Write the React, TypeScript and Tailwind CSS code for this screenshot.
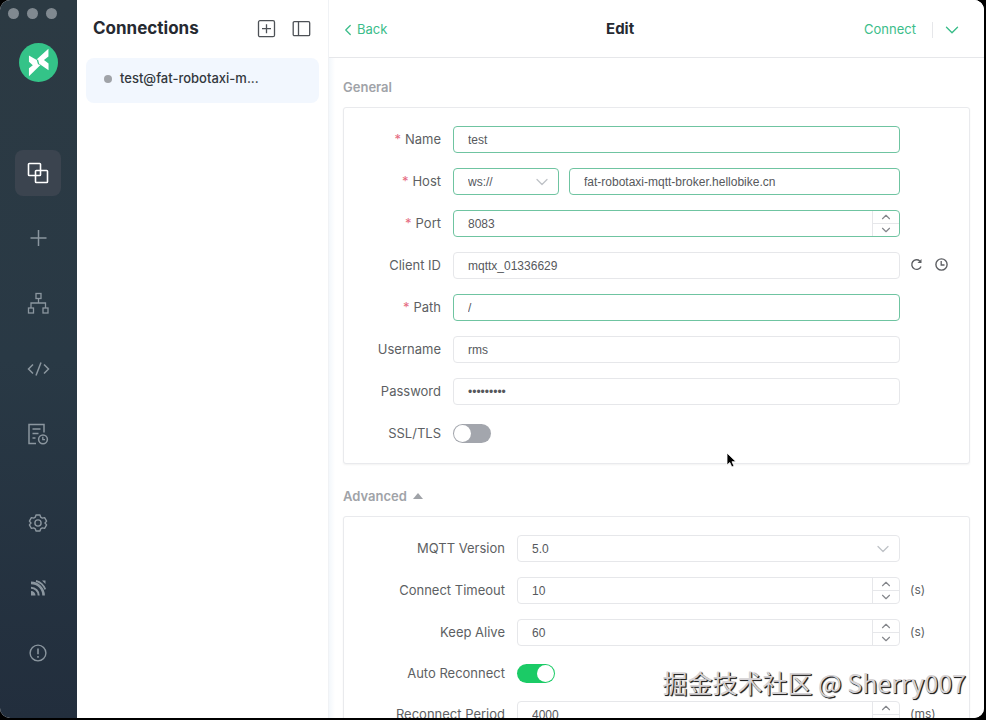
import React from "react";
import { ChevronDown, ChevronUp, ChevronLeft } from "lucide-react";

type IconProps = {
  size?: number;
  className?: string;
  children: React.ReactNode;
};

const Icon = ({ size = 24, className = "", children }: IconProps) => (
  <svg
    width={size}
    height={size}
    viewBox={`0 0 ${size} ${size}`}
    fill="none"
    stroke="currentColor"
    strokeWidth="1.3"
    className={className}
    aria-hidden="true"
  >
    {children}
  </svg>
);

const navTop = [
  {
    name: "Connections",
    icon: (
      <Icon>
        <rect x="2.5" y="2.5" width="12" height="12" rx="0.8" strokeWidth="1.6" />
        <rect x="9.5" y="9.5" width="12" height="12" rx="0.8" strokeWidth="1.6" />
      </Icon>
    ),
  },
  {
    name: "New",
    icon: (
      <Icon>
        <path d="M12.5 4v16M4.5 12h16" strokeWidth="1.5" />
      </Icon>
    ),
  },
  {
    name: "Topics",
    icon: (
      <Icon>
        <rect x="10" y="2.5" width="5" height="5" />
        <rect x="2.5" y="17" width="5" height="5" />
        <rect x="17" y="17" width="5" height="5" />
        <path d="M12.5 7.5V12M5 17v-5h14.5v5" />
      </Icon>
    ),
  },
  {
    name: "Script",
    icon: (
      <Icon>
        <path d="M7 8.5L2.5 13 7 17.5M18 8.5l4.5 4.5-4.5 4.500M15 6.5l-5 13" strokeWidth="1.5" />
      </Icon>
    ),
  },
  {
    name: "Log",
    icon: (
      <Icon>
        <path d="M10 22.5H3v-19h15v8" strokeWidth="1.5" />
        <path d="M6.5 8h8M6.5 12.5h6M6.5 17h3" />
        <circle cx="17" cy="18.3" r="4.4" strokeWidth="1.5" />
        <path d="M16.8 15.8v2.8H19" />
      </Icon>
    ),
  },
];

const navBottom = [
  {
    name: "Settings",
    icon: (
      <Icon>
        <path
          d="M10 4h4l.7 2.2 1.6.9 2.3-.5 2 3.5-1.6 1.9 1.6 1.9-2 3.5-2.3-.5-1.6.9L14 20h-4l-.7-2.2-1.6-.9-2.3.5-2-3.5L5 12l-1.6-1.9 2-3.5 2.3.5 1.6-.9z"
          strokeWidth="1.4"
          strokeLinejoin="round"
        />
        <circle cx="12" cy="12" r="3.1" strokeWidth="1.4" />
      </Icon>
    ),
  },
  {
    name: "Feed",
    icon: (
      <Icon>
        <path d="M5 15a4.500 4.500 0 0 1 4.500 4.500H5zM16 4.500h3.500V8z" fill="currentColor" stroke="none" />
        <path d="M5 11.800a7.700 7.700 0 0 1 7.700 7.700" strokeWidth="2" />
        <path d="M5 6.900a12.600 12.600 0 0 1 12.600 12.600" strokeWidth="2.600" />
        <path d="M10 4.800c4.500 1.200 7.600 4.200 9.300 8.600" strokeWidth="1.800" />
      </Icon>
    ),
  },
  {
    name: "About",
    icon: (
      <Icon>
        <circle cx="12" cy="12" r="7.9" strokeWidth="1.4" />
        <path d="M12 7.5v5.7M12 15v1.8" strokeWidth="1.6" />
      </Icon>
    ),
  },
];

type FieldProps = {
  id: string;
  label: string;
  required?: boolean;
  wide?: boolean;
  short?: boolean;
  suffix?: React.ReactNode;
  children: React.ReactNode;
};

const Field = ({ id, label, required, wide, short, suffix, children }: FieldProps) => (
  <div className={`flex items-center gap-3 ${short ? "h-[25px]" : "h-[27px]"}`}>
    <label
      htmlFor={id}
      className={`shrink-0 pb-0.5 text-right text-[13px] leading-5 whitespace-nowrap text-[#5d5f63] ${wide ? "w-[161px]" : "w-[97px]"}`}
    >
      {required && <span className="mr-1 text-[#e56a80]">*</span>}
      {label}
    </label>
    <div className="flex min-w-0 flex-1 items-center gap-[10px]">{children}</div>
    <div className="-ml-0.5 flex w-[59px] shrink-0 items-center gap-3 pb-0.5 text-xs text-[#5d5f63]">{suffix}</div>
  </div>
);

const boxClass =
  "h-[27px] w-full min-w-0 rounded-[4px] border bg-white px-[14px] font-['Liberation_Sans',Arial,sans-serif] text-[12px] text-[#56585c] outline-none";
const borderFor = (valid?: boolean) => (valid ? "border-[#6fc4a1]" : "border-[#e6e7ea]");

type InputProps = { id: string; value: string; valid?: boolean; type?: string };

const TextInput = ({ id, value, valid, type = "text" }: InputProps) => (
  <input id={id} type={type} defaultValue={value} aria-label={id} className={`${boxClass} ${borderFor(valid)}`} />
);

const NumberInput = ({ id, value, valid }: InputProps) => (
  <div className={`flex h-[27px] w-full overflow-hidden rounded-[4px] border bg-white ${borderFor(valid)}`}>
    <input
      id={id}
      type="number"
      defaultValue={value}
      className="min-w-0 flex-1 px-[14px] font-['Liberation_Sans',Arial,sans-serif] text-[12px] text-[#56585c] outline-none [appearance:textfield] [&::-webkit-inner-spin-button]:appearance-none"
    />
    <div className="flex w-[27px] flex-col border-l border-[#e6e7ea] text-[#85878c]">
      <button type="button" aria-label="Increase" className="flex h-1/2 items-center justify-center border-b border-[#e6e7ea]">
        <ChevronUp size={14} />
      </button>
      <button type="button" aria-label="Decrease" className="flex h-1/2 items-center justify-center">
        <ChevronDown size={14} />
      </button>
    </div>
  </div>
);

const Select = ({ id, value, valid }: InputProps) => (
  <div className="relative w-full">
    <select id={id} className={`block appearance-none ${boxClass} ${borderFor(valid)}`}>
      <option>{value}</option>
    </select>
    <ChevronDown size={20} strokeWidth={1.5} className="pointer-events-none absolute top-1 right-[7px] text-[#bfc2c7]" />
  </div>
);

const Toggle = ({ id, on }: { id: string; on?: boolean }) => (
  <input
    id={id}
    type="checkbox"
    role="switch"
    defaultChecked={on}
    className="flex h-[19px] w-[38px] appearance-none items-center rounded-full bg-[#a3a6ad] px-px before:size-[17px] before:rounded-full before:bg-white checked:justify-end checked:bg-[#1bcb66]"
  />
);

const Sidebar = () => (
  <aside className="flex w-[77px] shrink-0 flex-col items-center bg-linear-to-b from-[#2c3a43] via-[#293945] to-[#222e3d] pr-px pb-[42px] text-[#8b969f]">
    <div className="flex gap-2 self-start pt-2 pl-2">
      <span className="size-[11px] rounded-full bg-[#808990]" />
      <span className="size-[11px] rounded-full bg-[#808990]" />
      <span className="size-[11px] rounded-full bg-[#808990]" />
    </div>
    <svg viewBox="0 0 40 40" className="mt-6 size-[39px]" aria-hidden="true">
      <circle cx="20" cy="20" r="20" fill="#34c388" />
      <path d="M10.200 12.800l8 4.600 1.300 4.300 2.500.8L10.200 34v-8l4-3.300-4-3.500z" fill="#fff" />
      <path d="M30.200 6v7.800l-4.600 3.600 4.700 3.700V28l-9.600-6.800-1.100-3.900-1.600-.3z" fill="#fff" />
    </svg>
    <nav className="mt-[68px] flex flex-1 flex-col items-center">
      <div className="flex flex-col gap-[19px]">
        {navTop.map((item, idx) => (
          <button
            key={item.name}
            aria-label={item.name}
            className={`flex size-[46px] items-center justify-center rounded-lg ${idx === 0 ? "bg-[#3b444f] text-white" : ""}`}
          >
            {item.icon}
          </button>
        ))}
      </div>
      <div className="mt-auto flex flex-col gap-[19px]">
        {navBottom.map((item) => (
          <button key={item.name} aria-label={item.name} className="flex size-[46px] items-center justify-center">
            {item.icon}
          </button>
        ))}
      </div>
    </nav>
  </aside>
);

const Connections = () => (
  <section className="w-[251px] shrink-0 px-[9px]">
    <div className="flex h-[58px] items-center px-2 text-[#4d5156]">
      <h1 className="-ml-px flex-1 text-[17px] font-bold text-[#262a31]">Connections</h1>
      <button aria-label="New connection" className="mr-4">
        <Icon size={19}>
          <rect x="1.5" y="0.700" width="16" height="16" rx="1.5" />
          <path d="M9.5 4.200v9M5 8.700h9" />
        </Icon>
      </button>
      <button aria-label="Toggle list">
        <Icon size={19}>
          <rect x="1.2" y="1.700" width="16.5" height="14" rx="1.2" />
          <path d="M6.5 1.700v14" />
        </Icon>
      </button>
    </div>
    <a href="#test" className="flex h-[45px] items-center gap-2 rounded-lg bg-[#f2f7fe] pb-1 pl-[18px] text-[13px] font-medium text-[#33373d]">
      <span className="size-2 rounded-full bg-[#a0a3a8]" />
      test@fat-robotaxi-m...
    </a>
  </section>
);

const App = () => {
  return (
    <div className="relative h-screen overflow-hidden bg-black pr-0.5 pb-0.5 font-['Inter',sans-serif]">
      <div className="flex h-full overflow-hidden rounded-[10px] bg-white">
        <Sidebar />
        <Connections />
        <main className="min-w-0 flex-1 border-l border-[#f0f2f5] bg-linear-to-r from-[#f3f7fb] to-white to-[6px]">
          <header className="grid h-[58px] grid-cols-[4fr_auto_5fr] items-center border-b border-[#e6e7ea] bg-white pt-0.5 pr-[21px] pl-[14px] text-[13px] text-[#3bbd8a]">
            <button className="-ml-1 flex items-center">
              <ChevronLeft size={18} strokeWidth={1.7} />
              Back
            </button>
            <h2 className="text-center text-[15px] font-bold text-[#262a31]">Edit</h2>
            <div className="flex items-center justify-end">
              <button>Connect</button>
              <span className="mr-2 ml-4 h-4 border-l border-[#e6e7ea]" />
              <button aria-label="More">
                <ChevronDown size={22} strokeWidth={1.5} />
              </button>
            </div>
          </header>

          <form className="px-[14px]">
            <h3 className="mt-[19px] text-[13px] leading-5 font-semibold text-[#a0a3a8]">General</h3>
            <div className="mt-[10px] flex flex-col gap-[15px] rounded-[3px] border border-[#e9eaed] bg-white pt-[18px] pb-4 shadow-xs">
              <Field id="name" label="Name" required>
                <TextInput id="name" value="test" valid />
              </Field>
              <Field id="protocol" label="Host" required>
                <div className="w-[106px] shrink-0">
                  <Select id="protocol" value="ws://" valid />
                </div>
                <TextInput id="host" value="fat-robotaxi-mqtt-broker.hellobike.cn" valid />
              </Field>
              <Field id="port" label="Port" required>
                <NumberInput id="port" value="8083" valid />
              </Field>
              <Field
                id="clientId"
                label="Client ID"
                suffix={
                  <>
                    <button type="button" aria-label="Refresh">
                      <Icon size={13}>
                        <path d="M11 8.5A4.8 4.8 0 1 1 9.8 3" strokeWidth="1.4" />
                        <path d="M11.5 1v4h-4z" fill="currentColor" stroke="none" />
                      </Icon>
                    </button>
                    <button type="button" aria-label="Set time">
                      <Icon size={13}>
                        <circle cx="6.5" cy="6.5" r="5.6" strokeWidth="1.4" />
                        <path d="M6.2 3v4h3.3" />
                      </Icon>
                    </button>
                  </>
                }
              >
                <TextInput id="clientId" value="mqttx_01336629" />
              </Field>
              <Field id="path" label="Path" required>
                <TextInput id="path" value="/" valid />
              </Field>
              <Field id="username" label="Username">
                <TextInput id="username" value="rms" />
              </Field>
              <Field id="password" label="Password">
                <TextInput id="password" value="robotaxi1" type="password" />
              </Field>
              <Field id="ssl" label="SSL/TLS">
                <Toggle id="ssl" />
              </Field>
            </div>

            <h3 className="mt-[22px] flex items-center gap-1.5 text-[13px] leading-5 font-semibold text-[#a0a3a8]">
              Advanced
              <svg width="10" height="6" viewBox="0 0 10 6" aria-hidden="true">
                <path d="M5 0l5 6H0z" fill="currentColor" />
              </svg>
            </h3>
            <div className="mt-[10px] flex flex-col gap-[15px] rounded-[3px] border border-[#e9eaed] bg-white pt-[18px] pb-4 shadow-xs">
              <Field id="version" label="MQTT Version" wide>
                <Select id="version" value="5.0" />
              </Field>
              <Field id="timeout" label="Connect Timeout" wide suffix="(s)">
                <NumberInput id="timeout" value="10" />
              </Field>
              <Field id="keepAlive" label="Keep Alive" wide suffix="(s)">
                <NumberInput id="keepAlive" value="60" />
              </Field>
              <Field id="reconnect" label="Auto Reconnect" wide short>
                <Toggle id="reconnect" on />
              </Field>
              <Field id="period" label="Reconnect Period" wide suffix="(ms)">
                <NumberInput id="period" value="4000" />
              </Field>
            </div>
          </form>
        </main>
      </div>

      {/* mouse pointer */}
      <svg width="12" height="18" viewBox="0 0 12 18" className="absolute top-[452px] left-[726px]" aria-hidden="true">
        <path d="M1 1v12l2.8-2.5 2 4.5L8 14l-2-4.300h4z" fill="#000" stroke="#fff" strokeWidth="0.8" />
      </svg>
      <p className="absolute right-5 bottom-5 font-['Noto_Sans_CJK_SC',sans-serif] text-[25px] leading-9 whitespace-nowrap text-[#d6d3d5] [text-shadow:1px_1px_1px_#222,1px_1px_0_#333]">
        掘金技术社区 @ Sherry007
      </p>
    </div>
  );
};

export default App;
